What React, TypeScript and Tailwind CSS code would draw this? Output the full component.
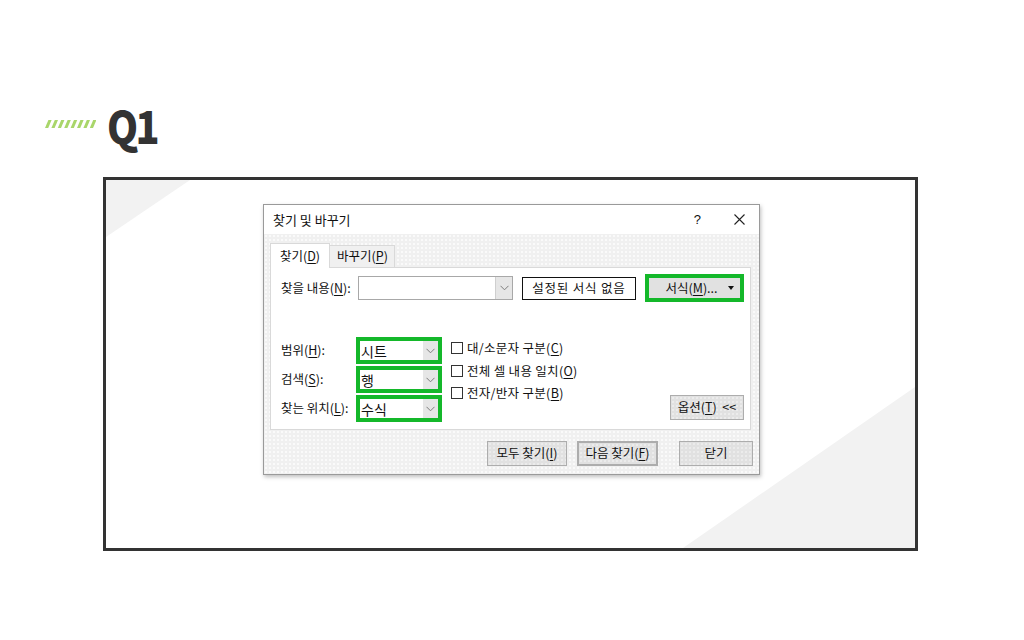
import React from "react";

function U({ c }: { c: string }) {
  return <span className="underline underline-offset-[2px] decoration-[1px]">{c}</span>;
}

function Chevron() {
  return (
    <svg width="9" height="6" viewBox="0 0 9 6">
      <polyline points="0.5,0.8 4.5,4.8 8.5,0.8" fill="none" stroke="#7d7d7d" strokeWidth="1" />
    </svg>
  );
}

function Stripes() {
  const bars = Array.from({ length: 8 }, (_, i) => i);
  return (
    <svg width="51" height="8" viewBox="0 0 51 8">
      {bars.map((i) => {
        const x = i * 6.4;
        return <polygon key={i} points={`${x + 3.4},0 ${x + 6.6},0 ${x + 3.2},8 ${x},8`} fill="#a9d66a" />;
      })}
    </svg>
  );
}

function GreenCombo({ text }: { text: string }) {
  return (
    <div className="w-[86px] h-[27px] border-[4px] border-[#14b82a] bg-white flex">
      <div className="flex-1 flex items-center pl-[1px] text-[14px] leading-none text-[#111]">{text}</div>
      <div className="w-[15px] bg-[#e6e6e6] flex items-center justify-center">
        <Chevron />
      </div>
    </div>
  );
}

function Check({ children }: { children: React.ReactNode }) {
  return (
    <div className="h-[22.5px] flex items-center gap-[4px]">
      <div className="w-[12px] h-[12px] border border-[#333] bg-white" />
      <span className="leading-none tracking-[0.3px]">{children}</span>
    </div>
  );
}

const btn =
  "h-[25px] border border-[#adadad] bg-[#e1e1e1] bg-[radial-gradient(circle,#ececec_0.7px,transparent_0.9px)] bg-[size:4px_4px] flex items-center justify-center leading-none text-[#111]";

export default function App() {
  return (
    <div className="w-[1024px] h-[640px] bg-white overflow-hidden font-['Noto_Sans_CJK_KR','Noto_Sans',sans-serif]">
      {/* header */}
      <div className="flex items-center pl-[45px] pt-[101px] h-[147px]">
        <Stripes />
        <span className="ml-[11px] inline-block origin-left scale-x-[0.88] text-[45px] font-black leading-none tracking-[-3px] text-[#333] font-['Noto_Sans_CJK_KR',sans-serif]">
          Q1
        </span>
      </div>

      {/* frame */}
      <div className="relative ml-[103px] mt-[30px] w-[815px] h-[374px] border-[3px] border-[#333] bg-white">
        <svg className="absolute inset-0" width="809" height="368" viewBox="0 0 809 368">
          <polygon points="0,0 84,0 0,57" fill="#f2f2f2" />
          <polygon points="577,368 809,207 809,368" fill="#f2f2f2" />
        </svg>

        {/* dialog */}
        <div className="relative ml-[157px] mt-[24px] w-[497px] h-[271px] border border-[#9a9a9a] shadow-[1px_2px_4px_rgba(0,0,0,0.25)] text-[12.5px] text-[#111] flex flex-col">
          {/* title bar */}
          <div className="h-[29px] bg-white flex items-center pl-[9px] pr-[14px] shrink-0">
            <span className="text-[13px] leading-none">찾기 및 바꾸기</span>
            <span className="ml-auto text-[13px] leading-none mr-[33px] font-['Liberation_Sans',sans-serif]">?</span>
            <svg width="11" height="11" viewBox="0 0 11 11">
              <path d="M0.5 0.5 L10.5 10.5 M10.5 0.5 L0.5 10.5" stroke="#222" strokeWidth="1.1" />
            </svg>
          </div>

          {/* body */}
          <div className="flex-1 bg-[#f0f0f0] bg-[radial-gradient(circle,#fbfbfb_0.7px,transparent_0.9px)] bg-[size:4px_4px] pl-[6px] pr-[6px] pt-[9px] flex flex-col">
            {/* tabs */}
            <div className="flex items-end h-[24px]">
              <div className="w-[60px] h-[25px] bg-white border border-b-0 border-[#d9d9d9] flex items-center pl-[9px] leading-none relative top-[1px]">
                찾기(<U c="D" />)
              </div>
              <div className="w-[65px] h-[22px] bg-[#f0f0f0] border border-l-0 border-b-0 border-[#d9d9d9] flex items-center pl-[7px] leading-none">
                바꾸기(<U c="P" />)
              </div>
            </div>

            {/* panel */}
            <div className="w-[481px] h-[163px] bg-white border border-[#d9d9d9] pl-[10px] pr-[6px] pt-[6px] flex flex-col">
              {/* row 1 */}
              <div className="flex items-center h-[28px]">
                <div className="w-[78px] leading-none">
                  찾을 내용(<U c="N" />):
                </div>
                <div className="w-[156px] h-[24px] border border-[#a8a8a8] bg-white flex">
                  <div className="flex-1" />
                  <div className="w-[17px] bg-[#e6e6e6] border-l border-[#cfcfcf] flex items-center justify-center">
                    <Chevron />
                  </div>
                </div>
                <div className="ml-[9px] w-[114px] h-[23px] border border-[#111] bg-white flex items-center justify-center leading-none tracking-[0.8px]">
                  설정된 서식 없음
                </div>
                <div className="ml-[9px] w-[100px] h-[28px] border-[4px] border-[#14b82a] bg-[#e1e1e1] flex items-center pl-[17px] pr-[6px] leading-none">
                  <span>
                    서식(<U c="M" />)...
                  </span>
                  <svg className="ml-auto" width="6" height="4" viewBox="0 0 6 4">
                    <polygon points="0,0 6,0 3,4" fill="#111" />
                  </svg>
                </div>
              </div>

              {/* lower */}
              <div className="flex mt-[35px]">
                <div className="flex flex-col gap-[2px]">
                  {[
                    ["범위(", "H", "):", "시트"],
                    ["검색(", "S", "):", "행"],
                    ["찾는 위치(", "L", "):", "수식"],
                  ].map(([a, u, b, v]) => (
                    <div key={u} className="flex items-center">
                      <div className="w-[75px] leading-none">
                        {a}
                        <U c={u} />
                        {b}
                      </div>
                      <GreenCombo text={v} />
                    </div>
                  ))}
                </div>
                <div className="ml-[9px] flex flex-col">
                  <Check>
                    대/소문자 구분(<U c="C" />)
                  </Check>
                  <Check>
                    전체 셀 내용 일치(<U c="O" />)
                  </Check>
                  <Check>
                    전자/반자 구분(<U c="B" />)
                  </Check>
                </div>
                <div className="ml-auto flex items-end pb-[2px]">
                  <div className={btn + " w-[74px]"}>
                    옵션(<U c="T" />)&nbsp;&nbsp;&lt;&lt;
                  </div>
                </div>
              </div>
            </div>

            {/* bottom buttons */}
            <div className="flex mt-[11px] pl-[217px]">
              <div className={btn + " w-[80px]"}>
                모두 찾기(<U c="I" />)
              </div>
              <div className={btn + " ml-[10px] w-[81px] border-[2px] border-[#0078d7]"}>
                다음 찾기(<U c="F" />)
              </div>
              <div className={btn + " ml-[21px] w-[74px]"}>닫기</div>
            </div>
          </div>
        </div>
      </div>
    </div>
  );
}
